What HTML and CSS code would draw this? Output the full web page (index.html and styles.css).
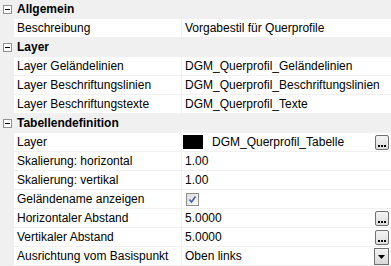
FILE: index.html
```html
<!DOCTYPE html>
<html lang="de">
<head>
    <meta charset="UTF-8">
    <title>Eigenschaften</title>
    <link rel="stylesheet" href="styles.css">
</head>
<body>
    <div class="grid">
        <div class="cat"><span class="gutter"><span class="toggle"></span></span><span class="cat-title">Allgemein</span></div>
        <div class="row"><span class="gutter"></span><span class="label">Beschreibung</span><span class="value">Vorgabestil für Querprofile</span></div>

        <div class="cat"><span class="gutter"><span class="toggle"></span></span><span class="cat-title">Layer</span></div>
        <div class="row"><span class="gutter"></span><span class="label">Layer Geländelinien</span><span class="value">DGM_Querprofil_Geländelinien</span></div>
        <div class="row"><span class="gutter"></span><span class="label">Layer Beschriftungslinien</span><span class="value">DGM_Querprofil_Beschriftungslinien</span></div>
        <div class="row"><span class="gutter"></span><span class="label">Layer Beschriftungstexte</span><span class="value">DGM_Querprofil_Texte</span></div>

        <div class="cat"><span class="gutter"><span class="toggle"></span></span><span class="cat-title">Tabellendefinition</span></div>
        <div class="row">
            <span class="gutter"></span><span class="label">Layer</span>
            <span class="value"><span class="swatch"></span><span class="text">DGM_Querprofil_Tabelle</span>
                <span class="btn-ellipsis"><svg width="8" height="2" viewBox="0 0 8 2"><rect x="0" y="0" width="2" height="2"/><rect x="3" y="0" width="2" height="2"/><rect x="6" y="0" width="2" height="2"/></svg></span>
            </span>
        </div>
        <div class="row"><span class="gutter"></span><span class="label">Skalierung: horizontal</span><span class="value">1.00</span></div>
        <div class="row"><span class="gutter"></span><span class="label">Skalierung: vertikal</span><span class="value">1.00</span></div>
        <div class="row">
            <span class="gutter"></span><span class="label">Geländename anzeigen</span>
            <span class="value"><span class="check"><svg width="11" height="11" viewBox="0 0 11 11"><path d="M2.5 5.5 L4.5 8 L8.5 2.5" fill="none" stroke="#4b5e9a" stroke-width="1.6"/></svg></span></span>
        </div>
        <div class="row">
            <span class="gutter"></span><span class="label">Horizontaler Abstand</span>
            <span class="value"><span class="text">5.0000</span>
                <span class="btn-ellipsis"><svg width="8" height="2" viewBox="0 0 8 2"><rect x="0" y="0" width="2" height="2"/><rect x="3" y="0" width="2" height="2"/><rect x="6" y="0" width="2" height="2"/></svg></span>
            </span>
        </div>
        <div class="row">
            <span class="gutter"></span><span class="label">Vertikaler Abstand</span>
            <span class="value"><span class="text">5.0000</span>
                <span class="btn-ellipsis"><svg width="8" height="2" viewBox="0 0 8 2"><rect x="0" y="0" width="2" height="2"/><rect x="3" y="0" width="2" height="2"/><rect x="6" y="0" width="2" height="2"/></svg></span>
            </span>
        </div>
        <div class="row">
            <span class="gutter"></span><span class="label">Ausrichtung vom Basispunkt</span>
            <span class="value"><span class="text">Oben links</span>
                <span class="btn-drop"><svg width="7" height="4" viewBox="0 0 7 4"><path d="M0 0 H7 L3.5 4 Z"/></svg></span>
            </span>
        </div>
    </div>
</body>
</html>
```

FILE: styles.css
```css
body {
    margin: 0;
    font-family: 'Liberation Sans', Arial, sans-serif;
    font-size: 12px;
    color: #000;
    background: #f0f0f0;
}

.grid {
    width: 391px;
    height: 266px;
    overflow: hidden;
}

.cat,
.row {
    display: flex;
    height: 19px;
    box-sizing: border-box;
}

.cat {
    background: #f0f0f0;
}

.row {
    border-bottom: 1px solid #f0f0f0;
}

.gutter {
    flex: 0 0 14px;
    background: #f0f0f0;
    display: flex;
    align-items: center;
    justify-content: center;
}

.toggle {
    position: relative;
    width: 7px;
    height: 7px;
    border: 1px solid #919191;
    background: #fff;
    margin-left: 1px;
}

.toggle::after {
    content: "";
    position: absolute;
    left: 1px;
    top: 3px;
    width: 5px;
    height: 1px;
    background: #000;
}

.cat-title {
    font-weight: bold;
    padding-left: 3px;
    line-height: 19px;
}

.label {
    flex: 0 0 168px;
    background: #fff;
    padding-left: 3px;
    box-sizing: border-box;
    border-right: 1px solid #f0f0f0;
    line-height: 18px;
    white-space: nowrap;
    overflow: hidden;
}

.value {
    flex: 1;
    background: #fff;
    padding-left: 3px;
    padding-right: 2px;
    display: flex;
    align-items: center;
    white-space: nowrap;
    line-height: 18px;
}

.value .text {
    flex: 1;
}

.swatch {
    width: 20px;
    height: 14px;
    background: #000;
    margin-left: -2px;
    margin-right: 9px;
}

.btn-ellipsis {
    width: 12px;
    height: 13px;
    border: 1px solid #707070;
    border-radius: 2px;
    background: linear-gradient(#f4f4f4, #dcdcdc);
    display: flex;
    align-items: flex-end;
    justify-content: center;
    padding-bottom: 2px;
    box-sizing: border-box;
    height: 15px;
    width: 14px;
}

.btn-drop {
    width: 15px;
    height: 17px;
    box-sizing: border-box;
    border: 1px solid #707070;
    background: linear-gradient(#f2f2f2, #d8d8d8);
    display: flex;
    align-items: center;
    justify-content: center;
    margin-top: 1px;
}

.check {
    width: 13px;
    height: 13px;
    box-sizing: border-box;
    border: 1px solid #8e8f8f;
    background: linear-gradient(135deg, #dcdcdc, #fbfbfb);
    display: flex;
    align-items: center;
    justify-content: center;
    margin-left: 1px;
}
```
